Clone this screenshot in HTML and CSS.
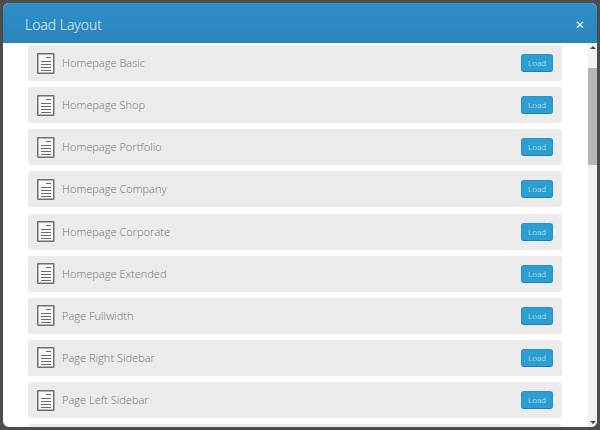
FILE: index.html
```html
<!DOCTYPE html>
<html lang="en">
<head>
<meta charset="utf-8">
<title>Load Layout</title>
<link rel="stylesheet" href="styles.css">
</head>
<body>
<svg class="defs" width="0" height="0" aria-hidden="true">
  <symbol id="doc" viewBox="0 0 18 21">
    <rect x="0.75" y="0.75" width="16" height="19.5" rx="0.5" fill="#f8f8f8" stroke="#6c7076" stroke-width="1.5"/>
    <path d="M9 4.5h5M4 8.5h10M4 11.5h10M4 14.5h10M4 17.5h10" stroke="#6a6a6a" stroke-width="1.2" fill="none"/>
  </symbol>
</svg>
<div class="modal">
  <header class="head">
    <h1 class="title">Load Layout</h1>
    <span class="close">×</span>
  </header>
  <div class="body">
    <ul class="list">
      <li class="row"><svg class="doc"><use href="#doc"/></svg><span class="name">Homepage Basic</span><button class="load">Load</button></li>
      <li class="row"><svg class="doc"><use href="#doc"/></svg><span class="name">Homepage Shop</span><button class="load">Load</button></li>
      <li class="row"><svg class="doc"><use href="#doc"/></svg><span class="name">Homepage Portfolio</span><button class="load">Load</button></li>
      <li class="row"><svg class="doc"><use href="#doc"/></svg><span class="name">Homepage Company</span><button class="load">Load</button></li>
      <li class="row"><svg class="doc"><use href="#doc"/></svg><span class="name">Homepage Corporate</span><button class="load">Load</button></li>
      <li class="row"><svg class="doc"><use href="#doc"/></svg><span class="name">Homepage Extended</span><button class="load">Load</button></li>
      <li class="row"><svg class="doc"><use href="#doc"/></svg><span class="name">Page Fullwidth</span><button class="load">Load</button></li>
      <li class="row"><svg class="doc"><use href="#doc"/></svg><span class="name">Page Right Sidebar</span><button class="load">Load</button></li>
      <li class="row"><svg class="doc"><use href="#doc"/></svg><span class="name">Page Left Sidebar</span><button class="load">Load</button></li>
      <li class="row"></li>
    </ul>
    <div class="scrollbar">
      <span class="arrow up"></span>
      <span class="thumb"></span>
      <span class="arrow down"></span>
    </div>
  </div>
</div>
</body>
</html>
```
FILE: styles.css
```css
* { box-sizing: border-box; }
html, body { height: 100%; }
body {
  margin: 0;
  padding: 3px;
  background: #4c4c4c;
  font-family: "Open Sans", "Liberation Sans", sans-serif;
  overflow: hidden;
}
.defs { position: absolute; }
.modal {
  height: 424px;
  display: flex;
  flex-direction: column;
  background: #fff;
  border-radius: 6px;
  overflow: hidden;
}
.head {
  flex: 0 0 40px;
  display: flex;
  align-items: center;
  justify-content: space-between;
  padding: 2px 13px 0 22px;
  background: linear-gradient(#2f90c9, #2a84ba);
  color: #fff;
}
.title {
  margin: 0;
  font-size: 14px;
  font-weight: 300;
  color: #f4fafd;
}
.close {
  font-size: 15px;
  font-weight: 400;
  line-height: 1;
}
.body {
  flex: 1;
  min-height: 0;
  display: flex;
}
.list {
  flex: 1;
  margin: 0;
  padding: 2px 26px 0 25px;
  list-style: none;
  overflow: hidden;
}
.row {
  height: 36px;
  margin-bottom: 6.14px;
  display: flex;
  align-items: center;
  padding: 0 9px;
  background: #ebebeb;
  border-radius: 3px;
}
.doc { width: 18px; height: 21px; flex: none; }
.name {
  flex: 1;
  margin-left: 7px;
  padding-bottom: 1px;
  font-size: 11px;
  font-weight: 300;
  color: #737373;
  letter-spacing: 0.03px;
}
.load {
  width: 32px;
  height: 18px;
  padding: 0 0 1px;
  border: 1px solid #2a93c4;
  border-bottom-color: #1f7fae;
  border-radius: 3px;
  background: #2b9fd2;
  color: #e4f3fa;
  font-family: inherit;
  font-size: 8px;
  font-weight: 300;
}
.scrollbar {
  flex: 0 0 9px;
  display: flex;
  flex-direction: column;
  align-items: center;
  background: #f1f1f1;
}
.thumb {
  margin-top: 19px;
  width: 100%;
  height: 97px;
  background: #b8b4b2;
}
.arrow {
  width: 0;
  height: 0;
  border-left: 3px solid transparent;
  border-right: 3px solid transparent;
}
.up { margin-top: 3px; border-bottom: 3px solid #444; }
.down { margin-top: auto; margin-bottom: 3px; border-top: 3px solid #444; }
```
